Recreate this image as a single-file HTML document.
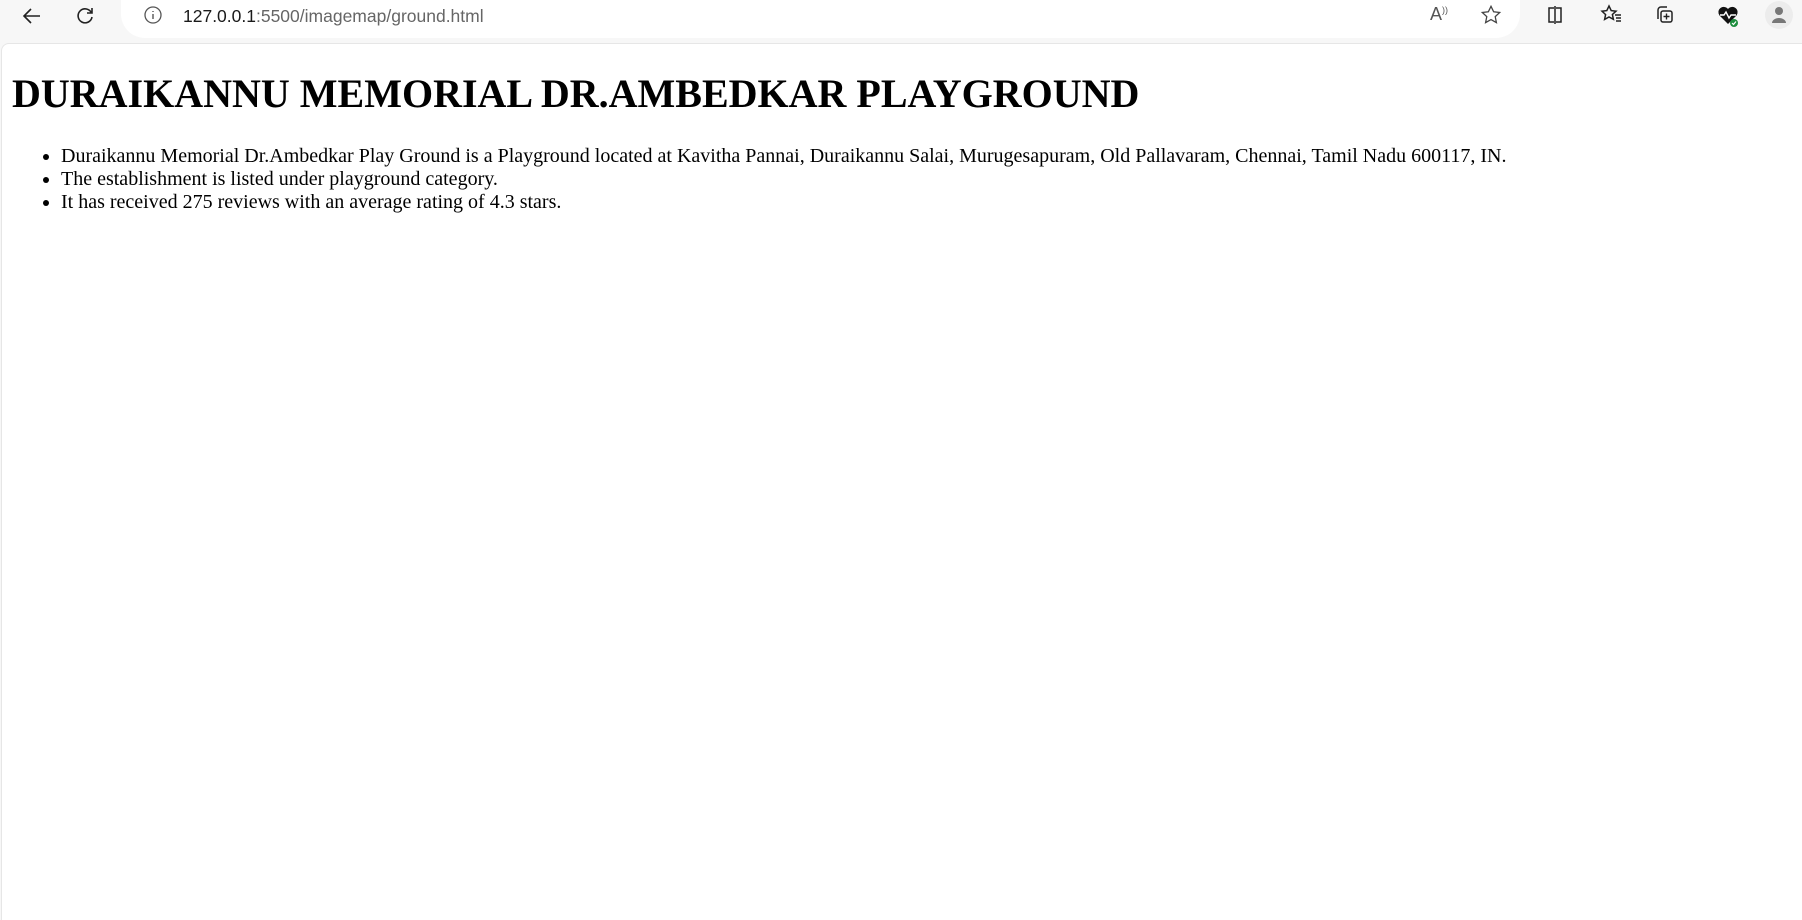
<!DOCTYPE html>
<html><head><meta charset="utf-8"><style>
html,body{margin:0;padding:0;width:1802px;height:919px;overflow:hidden;background:#f7f7f7;font-family:"Liberation Serif",serif;}
.bar{position:absolute;left:0;top:0;width:1802px;height:43px;background:#f7f7f7;}
.pill{position:absolute;left:121px;top:-10px;width:1399px;height:48px;background:#fff;border-radius:0 0 24px 24px;}
.url{position:absolute;left:183px;top:6px;font-family:"Liberation Sans",sans-serif;font-size:17.5px;color:#1a1a1a;}
.url span{color:#666;}
.page{position:absolute;left:1px;top:43px;width:1801px;height:876px;background:#fff;border-top-left-radius:8px;border-top:1px solid #e6e6e6;border-left:1px solid #e6e6e6;}
h1{position:absolute;left:12px;top:72px;margin:0;font-size:40px;font-weight:bold;white-space:nowrap;line-height:44px;}
ul{position:absolute;left:12px;top:145px;margin:0;padding-left:49px;font-size:20px;line-height:23px;white-space:nowrap;}
svg{position:absolute;}
</style></head><body>
<div class="bar">
<svg style="left:20px;top:4px" width="24" height="24" viewBox="0 0 24 24"><path d="M20 12H4M11 5l-7 7 7 7" fill="none" stroke="#222" stroke-width="1.6"/></svg>
<svg style="left:73px;top:4px" width="24" height="24" viewBox="0 0 24 24"><path d="M18.5 9A7 7 0 1 0 19 13M19 4v5h-5" fill="none" stroke="#222" stroke-width="1.6"/></svg>
<div class="pill"></div>
<svg style="left:143px;top:5px" width="20" height="20" viewBox="0 0 20 20"><circle cx="10" cy="10" r="8" fill="none" stroke="#555" stroke-width="1.3"/><path d="M10 9v5M10 6v1" stroke="#555" stroke-width="1.4"/></svg>
<div class="url">127.0.0.1<span>:5500/imagemap/ground.html</span></div>
<div style="position:absolute;left:1430px;top:4px;font-family:'Liberation Sans',sans-serif;font-size:18px;color:#555">A<sup style="font-size:9px">))</sup></div>
<svg style="left:1480px;top:4px" width="22" height="22" viewBox="0 0 24 24"><path d="M12 2.5l2.9 6 6.6.8-4.9 4.5 1.3 6.5L12 17l-5.9 3.3 1.3-6.5-4.9-4.5 6.6-.8z" fill="none" stroke="#444" stroke-width="1.4"/></svg>
<svg style="left:1545px;top:5px" width="20" height="20" viewBox="0 0 20 20"><path d="M9 3H4v14h5M11 3h5v14h-5M10 1v18" fill="none" stroke="#222" stroke-width="1.5"/></svg>
<svg style="left:1600px;top:4px" width="24" height="22" viewBox="0 0 24 22"><path d="M9 2l2.2 4.6 4.8.6-3.6 3.3 1 4.8L9 13l-4.4 2.4 1-4.8L2 7.2l4.8-.6z" fill="none" stroke="#222" stroke-width="1.5"/><path d="M15 11h6M16 14h5M16 17h5" stroke="#222" stroke-width="1.4"/></svg>
<svg style="left:1653px;top:4px" width="22" height="22" viewBox="0 0 22 22"><path d="M5 15V6a3 3 0 0 1 3-3h6" fill="none" stroke="#222" stroke-width="1.5"/><rect x="8" y="7" width="11" height="11" rx="2" fill="none" stroke="#222" stroke-width="1.5"/><path d="M13.5 9.5v6M10.5 12.5h6" stroke="#222" stroke-width="1.4"/></svg>
<svg style="left:1716px;top:4px" width="24" height="24" viewBox="0 0 24 24"><path d="M12 20L3.5 11.5A4.5 4.5 0 0 1 12 5a4.5 4.5 0 0 1 8.5 6.5z" fill="#111"/><path d="M4 11h4l2-3 3 6 2-3h5" fill="none" stroke="#fff" stroke-width="1.4"/><circle cx="18" cy="19" r="4" fill="#1e8e3e"/><path d="M16 19l1.5 1.5 2.5-3" fill="none" stroke="#fff" stroke-width="1.2"/></svg>
<div style="position:absolute;left:1765px;top:1px;width:28px;height:28px;border-radius:50%;background:#ececec"></div>
<svg style="left:1770px;top:5px" width="18" height="20" viewBox="0 0 18 20"><circle cx="9" cy="6" r="4" fill="#777"/><path d="M2 18a7 5 0 0 1 14 0z" fill="#777"/></svg>
</div>
<div class="page"></div>
<h1>DURAIKANNU MEMORIAL DR.AMBEDKAR PLAYGROUND</h1>
<ul>
<li>Duraikannu Memorial Dr.Ambedkar Play Ground is a Playground located at Kavitha Pannai, Duraikannu Salai, Murugesapuram, Old Pallavaram, Chennai, Tamil Nadu 600117, IN.</li>
<li>The establishment is listed under playground category.</li>
<li>It has received 275 reviews with an average rating of 4.3 stars.</li>
</ul>
</body></html>
